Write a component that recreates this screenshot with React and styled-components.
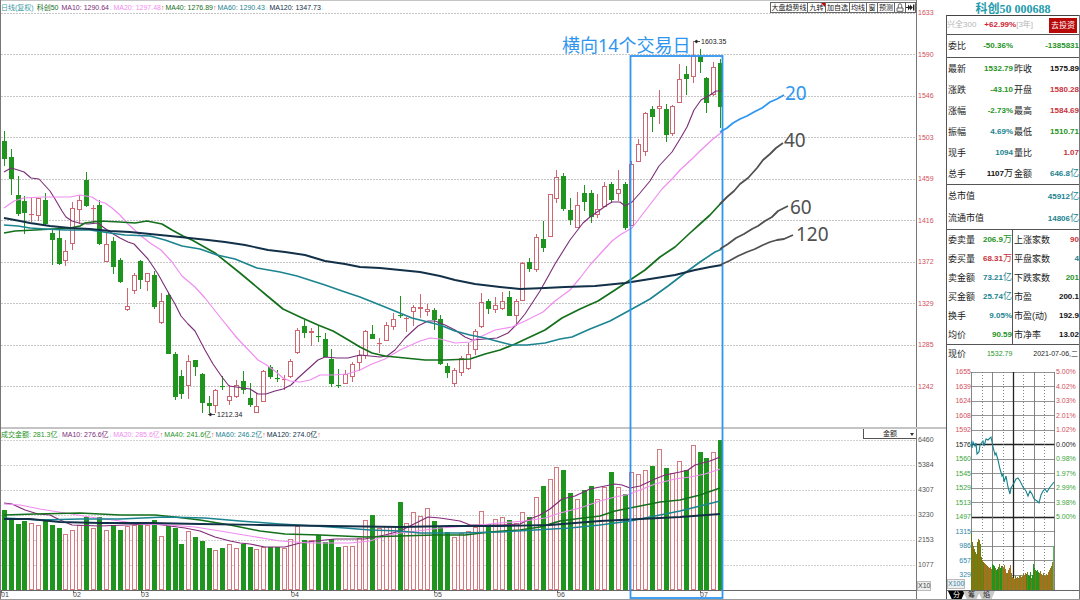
import React, { useState } from "react"
import styled, { createGlobalStyle } from "styled-components"

const GREEN = "#1f941f"
const RED = "#c8323c"
const TEAL = "#1c8490"
const PURPLE = "#7a2d78"
const PINK = "#f08cf0"
const NAVY = "#123048"
const BLUE = "#2f96f0"

const GlobalStyle = createGlobalStyle`
  * {
    box-sizing: border-box;
  }
  body {
    margin: 0;
    background: #fff;
    color: #222;
    font-family: "Liberation Sans", "Noto Sans CJK SC", sans-serif;
    font-size: 7px;
    line-height: 8px;
  }
  button, select {
    font: inherit;
    color: inherit;
    margin: 0;
    padding: 0;
    border-radius: 0;
    background: none;
  }
  a {
    color: inherit;
    text-decoration: none;
  }
`

const Page = styled.div`
  display: grid;
  grid-template-columns: 1fr 134px;
  min-height: 100vh;
  border-bottom: 1px solid #999;
`

const Main = styled.main`
  position: relative;
  border-left: 1px solid #777;
  min-width: 0;
`

const Pane = styled.section`
  display: grid;
  grid-template-columns: 1fr 30px;
  border-top: ${(p) => (p.$divided ? "2px solid #c4c4c4" : "none")};
`

const PlotColumn = styled.div`
  display: flex;
  flex-direction: column;
  min-width: 0;
`

const PlotHeader = styled.div`
  display: flex;
  justify-content: space-between;
  align-items: flex-end;
  height: ${(p) => p.$height}px;
  border-top: ${(p) => (p.$topLine ? "1px solid #c4c4c4" : "none")};
`

const Legend = styled.div`
  display: flex;
  gap: 1px;
  white-space: nowrap;
  line-height: 10px;
`

const LegendItem = styled.span`
  color: ${(p) => p.$color};
  margin-right: ${(p) => (p.$plain ? 2 : 0)}px;
`

const Trend = styled.span`
  color: ${(p) => (p.$up ? "#f03c3c" : "#bfe0e4")};
`

const Plot = styled.svg`
  display: block;
  width: 100%;
  height: auto;
`

const Axis = styled.ul`
  display: flex;
  flex-direction: column;
  justify-content: space-between;
  list-style: none;
  margin: 0;
  padding: 0 0 0 1px;
  height: ${(p) => p.$height}px;
  margin-top: ${(p) => p.$top}px;
  color: ${(p) => p.$color};
  text-align: ${(p) => p.$align || "left"};
`

const AxisLabel = styled.li`
  height: 8px;
  color: ${(p) => p.$color};
`

const AxisColumn = styled.div`
  border-left: 1px solid #777;
`

const UnitBadge = styled.span`
  display: inline-block;
  margin-top: ${(p) => p.$top || 0}px;
  border: 1px solid #bbb;
  background: #eee;
  color: ${(p) => p.$color};
`

const Toolbar = styled.div`
  display: flex;
  height: 11px;
  border: 1px solid #666;
  border-right: none;
`

const ToolButton = styled.button`
  position: relative;
  display: flex;
  align-items: center;
  justify-content: center;
  border: none;
  border-right: 1px solid #666;
  width: ${(p) => p.$width}px;
  white-space: nowrap;
  line-height: 8px;
`

const Corner = styled.i`
  position: absolute;
  top: 0;
  right: 0;
  border-top: 4px solid #d00000;
  border-left: 4px solid transparent;
`

const MetricPicker = styled.label`
  position: relative;
  width: 53px;
  height: 10px;
  align-self: flex-start;
  border: 1px solid #555;
  border-top: none;
  border-right: none;

  select {
    appearance: none;
    border: none;
    width: 100%;
    height: 9px;
    text-align: center;
    text-align-last: center;
    line-height: 9px;
  }
  i {
    position: absolute;
    right: 2px;
    top: 4px;
    border: 2px solid transparent;
    border-top: 3px solid #333;
    pointer-events: none;
  }
`

const Overlay = styled.svg`
  position: absolute;
  top: 0;
  left: 0;
  width: calc(100% - 30px);
  height: auto;
  pointer-events: none;
  font-family: "Noto Sans", "Noto Sans CJK SC", sans-serif;
`

const Side = styled.aside`
  display: flex;
  flex-direction: column;
`

const Title = styled.h1`
  margin: 0;
  height: 15px;
  text-align: center;
  font: bold 12px/18px "Liberation Serif", "Noto Sans CJK SC", serif;
  color: #1e9cac;
`

const Box = styled.div`
  flex: 1;
  border-left: 1px solid #555;
  border-right: 1px solid #777;
`

const Promo = styled.div`
  display: flex;
  align-items: center;
  height: 19px;
  border-top: 1px solid #444;
  font-size: 8px;
  color: #b4b4b4;

  b {
    color: #d02434;
    margin-left: 8px;
  }
  button {
    margin: 1px 2px 0 auto;
    width: 28px;
    height: 15px;
    border: none;
    background: #b80808;
    color: #fff;
    font-size: 8px;
  }
`

const Stats = styled.dl`
  display: grid;
  grid-template-columns: ${(p) => (p.$single ? "1fr" : "66px 1fr")};
  grid-auto-rows: ${(p) => p.$row}px;
  margin: 0;
  border-top: 1px solid #555;
`

const Stat = styled.div`
  display: flex;
  justify-content: space-between;
  align-items: center;
  white-space: nowrap;

  &:nth-child(odd) {
    border-right: ${(p) => (p.$ruled ? "1px solid #555" : "none")};
  }
  dt {
    font-size: 9px;
    padding-left: 1px;
    color: #222;
  }
  dd {
    margin: 0;
    font-size: 8px;
    font-weight: bold;
    color: ${(p) => p.$color};
  }
  small {
    font-size: 9px;
    font-weight: normal;
  }
`

const RatioStat = styled(Stat)`
  display: grid;
  grid-template-columns: 24px 42px 1fr;

  dd {
    text-align: right;
  }
`

const QuoteLine = styled.div`
  display: flex;
  justify-content: space-between;
  align-items: center;
  height: 19px;
  padding: 0 1px;
  border-top: 1px solid #555;

  strong {
    font-size: 9px;
    font-weight: normal;
  }
  output {
    color: ${GREEN};
  }
`

const Intraday = styled.div`
  display: grid;
  grid-template-columns: 24px 1fr 24px;
  padding-top: 5px;
`

const IntradayPlot = styled(Plot)`
  margin-top: 4px;
`

const Tabs = styled.nav`
  display: flex;
  height: 9px;
  border-top: 1px solid #666;
  padding-left: 1px;
`

const Tab = styled.a`
  width: 17px;
  margin-right: -2px;
  text-align: center;
  clip-path: polygon(0 0, 100% 0, 80% 100%, 22% 100%);
  background: ${(p) => (p.$active ? "#000" : "#c8c8c8")};
  color: ${(p) => (p.$active ? "#fff" : "#222")};
`

// high, body top, body bottom, low, direction (1 = up), top of the turnover bar
const days = [
  [131, 141, 159, 166, 0, 510], [149, 157, 179, 195, 0, 519], [176, 195, 214, 216, 0, 524], [196, 201, 213, 234, 0, 521],
  [198, 214, 215, 222, 1, 523], [198, 198, 216, 221, 1, 525], [193, 200, 224, 225, 0, 521], [229, 233, 240, 265, 0, 525],
  [229, 238, 264, 265, 0, 528], [240, 251, 261, 266, 1, 534], [202, 208, 244, 250, 1, 530], [195, 200, 210, 224, 1, 525],
  [172, 180, 206, 207, 0, 517], [205, 208, 209, 223, 1, 528], [200, 205, 244, 245, 0, 517], [233, 244, 262, 262, 1, 530],
  [237, 241, 267, 274, 0, 525], [258, 260, 282, 283, 0, 530], [288, 306, 310, 311, 1, 526], [273, 275, 291, 294, 1, 525],
  [260, 261, 280, 289, 0, 525], [273, 273, 282, 291, 1, 525], [271, 275, 307, 309, 0, 520], [293, 301, 323, 324, 1, 536],
  [292, 295, 354, 354, 0, 526], [352, 354, 397, 400, 0, 528], [370, 376, 394, 399, 0, 544], [355, 361, 386, 399, 1, 531],
  [360, 360, 367, 376, 0, 537], [373, 374, 403, 413, 0, 541], [396, 403, 406, 413, 0, 548], [389, 390, 406, 413, 1, 550],
  [376, 386, 387, 390, 0, 548], [385, 396, 401, 405, 1, 544], [380, 385, 397, 398, 1, 548], [371, 381, 390, 394, 0, 544],
  [383, 398, 405, 407, 0, 547], [393, 406, 413, 413, 1, 549], [370, 371, 402, 402, 1, 547], [365, 367, 377, 379, 0, 547],
  [370, 378, 379, 382, 0, 547], [375, 379, 380, 390, 1, 548], [359, 361, 377, 378, 1, 539], [328, 330, 353, 354, 1, 526],
  [320, 326, 333, 338, 0, 540], [328, 331, 333, 346, 1, 540], [325, 336, 337, 342, 0, 535], [333, 339, 357, 357, 0, 542],
  [349, 359, 384, 387, 0, 539], [369, 385, 386, 388, 0, 547], [370, 374, 384, 384, 1, 546], [362, 364, 377, 382, 1, 546],
  [350, 355, 363, 371, 1, 538], [330, 331, 356, 359, 1, 520], [325, 334, 339, 339, 0, 515], [338, 343, 344, 353, 1, 528],
  [322, 325, 341, 341, 1, 526], [313, 319, 327, 330, 1, 526], [296, 315, 316, 318, 0, 502], [317, 318, 319, 332, 1, 523],
  [305, 307, 312, 326, 1, 512], [294, 307, 309, 318, 1, 516], [304, 309, 312, 316, 1, 508], [308, 310, 320, 330, 0, 521],
  [315, 319, 364, 365, 0, 527], [363, 366, 373, 378, 0, 532], [368, 370, 384, 387, 1, 537], [356, 358, 373, 376, 1, 533],
  [343, 354, 369, 370, 1, 531], [329, 331, 350, 355, 1, 527], [293, 302, 327, 328, 1, 511], [299, 301, 309, 314, 0, 524],
  [297, 305, 310, 313, 1, 519], [292, 301, 309, 310, 1, 517], [291, 297, 316, 316, 0, 520], [299, 301, 316, 326, 1, 523],
  [262, 263, 301, 301, 1, 512], [258, 262, 269, 272, 0, 517], [234, 237, 270, 272, 1, 497], [221, 239, 248, 252, 0, 486],
  [194, 194, 237, 237, 1, 479], [170, 177, 199, 203, 1, 467], [173, 176, 209, 211, 0, 470], [198, 210, 220, 225, 0, 493],
  [192, 205, 228, 228, 1, 499], [185, 193, 202, 211, 0, 490], [190, 193, 217, 223, 0, 486], [194, 209, 215, 218, 1, 499],
  [182, 186, 207, 207, 1, 487], [182, 184, 200, 203, 0, 472], [170, 189, 194, 201, 1, 487], [182, 184, 228, 230, 0, 494],
  [161, 164, 226, 226, 1, 472], [139, 144, 162, 162, 1, 474], [112, 113, 152, 156, 1, 470], [106, 109, 117, 132, 0, 466],
  [90, 106, 109, 124, 1, 449], [104, 109, 135, 142, 0, 468], [105, 106, 134, 136, 1, 473], [64, 79, 103, 103, 1, 461],
  [66, 74, 79, 95, 0, 470], [41, 56, 77, 83, 1, 445], [49, 56, 62, 73, 0, 452], [77, 78, 103, 113, 0, 458],
  [62, 67, 95, 96, 1, 452], [59, 63, 107, 128, 0, 440],
]

const priceLines = [
  { color: PURPLE, width: 1.1, points: "4,172 11,168 18,170 24,172 31,178 39,179 50,191 55,199 62,211 66,217 72,221 79,223 88,224 98,223 103,227 110,232 120,238 128,242 134,244 148,259 158,274 168,292 175,304 181,316 188,324 195,331 205,350 213,364 222,377 229,386 236,387 243,388 250,389 258,394 266,394 275,391 283,389 291,385 298,378 308,369 318,360 325,357 337,358 348,358 360,355 380,357 387,356 395,350 405,338 418,326 428,321 435,321 445,325 455,330 465,337 472,340 485,339 497,338 508,333 516,325 525,314 540,291 555,264 570,240 583,223 590,217 600,210 607,205 612,202 620,202 625,206 632,202 640,193 650,181 659,166 672,152 680,139 687,127 694,110 701,100 710,95 716,91 722,91" },
  { color: PINK, width: 1.2, points: "4,208 14,201 24,198 42,197 70,197 80,195 92,197 98,201 105,203 112,208 120,215 128,224 140,235 150,243 161,250 172,262 182,276 195,287 205,298 220,317 237,338 258,360 265,364 275,371 283,378 290,381 300,382 310,380 320,375 333,375 347,374 360,370 372,364 385,359 400,350 420,341 430,338 440,339 455,343 470,342 480,337 495,330 512,327 525,321 543,312 555,301 570,290 580,278 590,265 600,254 612,241 620,235 632,228 642,215 652,202 662,189 673,178 680,170 693,158 700,151 713,139 722,132" },
  { color: "#14701c", width: 1.7, points: "4,233 15,231 35,230 70,228 80,226 85,223 100,221 120,222 135,223 147,221 162,224 172,230 183,236 192,240 215,253 240,273 265,294 283,309 300,317 318,325 333,331 345,338 360,347 372,353 385,356 405,358 425,360 445,360 470,359 485,354 500,350 515,344 530,337 545,330 562,318 580,309 598,301 615,290 630,280 645,270 660,257 675,247 690,233 700,224 710,215 722,202" },
  { color: TEAL, width: 1.6, points: "4,225 18,226 30,228 45,229 65,230 90,230 110,233 125,235 150,236 165,240 182,246 200,249 217,255 235,259 257,268 280,272 297,276 325,285 345,292 360,297 385,307 412,318 440,325 455,331 470,335 485,338 500,342 512,345 527,345 545,343 560,339 572,337 590,329 610,321 632,309 650,299 668,286 685,273 700,262 715,252 722,249" },
  { color: NAVY, width: 1.9, points: "4,218 20,221 30,223 50,226 70,228 90,229 110,231 130,232 150,234 180,237 208,240 225,242 245,245 268,250 285,252 305,255 325,261 345,264 360,267 380,268 400,270 420,272 440,276 455,280 475,284 500,287 520,289 545,288 565,287 595,286 625,283 650,279 675,275 695,270 710,267 722,265" },
]

const volumeLines = [
  { color: "#822a78", width: 1.2, points: "4,503 12,504 25,510 38,514 50,515 60,520 72,525 100,526 125,525 155,524 170,526 185,528 200,531 215,537 230,541 240,543 250,544 265,547 285,547 300,543 315,541 335,539 365,539 385,535 400,531 410,526 420,521 428,517 440,518 460,521 470,525 500,525 520,524 530,519 540,515 550,509 562,499 575,496 590,489 605,486 615,484 622,485 630,488 640,486 655,479 665,475 680,472 688,470 695,465 710,461 720,457" },
  { color: PINK, width: 1.2, points: "4,504 20,505 40,509 65,513 90,517 120,521 140,524 170,525 195,527 220,531 250,536 280,541 310,543 350,543 370,541 385,536 400,533 425,530 440,528 470,526 500,523 525,521 545,518 560,513 580,508 600,501 615,497 630,494 645,488 655,484 675,479 690,477 705,474 720,469" },
  { color: "#14701c", width: 1.6, points: "4,515 35,514 80,513 120,515 155,515 175,517 200,520 230,525 260,531 285,534 320,535 365,537 400,536 435,535 465,535 490,532 520,530 540,527 560,521 575,519 600,516 615,511 635,507 660,502 680,500 700,495 720,488" },
  { color: TEAL, width: 1.6, points: "4,518 40,520 80,519 120,519 165,517 205,518 240,521 280,524 315,526 345,528 370,530 400,531 420,533 460,533 500,532 535,530 570,528 600,525 630,521 655,516 680,511 700,506 720,501" },
  { color: NAVY, width: 1.8, points: "4,519 30,519 60,522 100,523 150,523 200,524 260,525 330,526 400,527 450,526 500,526 550,525 600,521 640,519 680,517 720,514" },
]

const priceLegend = [
  { color: "#3c9ca8", text: "日线(复权)" },
  { color: "#14701c", text: "科创50" },
  { color: PURPLE, text: "MA10: 1290.64", trend: "↓" },
  { color: PINK, text: "MA20: 1297.48", trend: "↑" },
  { color: "#14701c", text: "MA40: 1276.89", trend: "↑" },
  { color: TEAL, text: "MA60: 1290.43", trend: "↓" },
  { color: NAVY, text: "MA120: 1347.73", trend: "↓" },
]

const volumeLegend = [
  { color: GREEN, text: "成交金额: 281.3亿", trend: "↓" },
  { color: PURPLE, text: "MA10: 276.6亿", trend: "↓" },
  { color: PINK, text: "MA20: 285.6亿", trend: "↑" },
  { color: GREEN, text: "MA40: 241.6亿", trend: "↑" },
  { color: TEAL, text: "MA60: 246.2亿", trend: "↑" },
  { color: NAVY, text: "MA120: 274.0亿", trend: "↑" },
]

const months = [["01", 1], ["02", 73], ["03", 141], ["04", 291], ["05", 434], ["06", 557], ["07", 700]]

const quoteStats = [
  ["最新", "1532.79", GREEN], ["昨收", "1575.89", "#111"],
  ["涨跌", "-43.10", GREEN], ["开盘", "1580.28", RED],
  ["涨幅", "-2.73%", GREEN], ["最高", "1584.69", RED],
  ["振幅", "4.69%", TEAL], ["最低", "1510.71", GREEN],
  ["现手", "1094", TEAL], ["量比", "1.07", RED],
  ["总手", "1107", "#111", "万"], ["金额", "646.8", TEAL, "亿"],
]

const capStats = [
  ["总市值", "45912", TEAL, "亿"],
  ["流通市值", "14806", TEAL, "亿"],
]

const marketStats = [
  ["委卖量", "206.9", GREEN, "万"], ["上涨家数", "90", RED],
  ["委买量", "68.31", RED, "万"], ["平盘家数", "4", TEAL],
  ["卖金额", "73.21", TEAL, "亿"], ["下跌家数", "201", GREEN],
  ["买金额", "25.74", TEAL, "亿"], ["市盈", "200.1", "#111"],
  ["换手", "9.05%", TEAL], ["市盈(动)", "192.9", "#111"],
  ["均价", "90.59", GREEN], ["市净率", "13.02", "#111"],
]

const dayPrices = ["1655", "1639", "1624", "1608", "1592", "1576", "1560", "1545", "1529", "1513", "1497", "1315", "986", "657", "329"]
const dayPercents = ["5.00%", "4.02%", "3.03%", "2.01%", "1.02%", "0.00%", "0.98%", "1.97%", "2.99%", "3.98%", "5.00%"]
const dayLine = "971,441 972,448 973,442 975,446 976,443 977,454 979,452 980,445 983,441 984,446 986,439 988,440 991,437 992,442 993,447 995,455 996,453 998,460 1000,469 1002,476 1003,474 1004,482 1006,476 1008,487 1010,494 1011,488 1014,483 1016,479 1018,478 1020,481 1023,487 1026,491 1028,496 1030,491 1032,494 1034,499 1037,501 1039,503 1041,495 1043,491 1045,489 1047,492 1050,487 1054,482"
const dayVolumes = [
  57, 48, 44, 41, 38, 36, 48, 51, 50, 46, 33, 30, 28, 27, 26, 25, 24, 23, 22, 23, 21,
  26, 25, 24, 22, 20, 21, 23, 26, 22, 24, 24, 22, 25, 21, 17, 17, 20, 22, 25, 17, 13,
  12, 11, 14, 12, 13, 12, 14, 15, 13, 14, 16, 15, 17, 16, 18, 15, 14, 18, 12, 15, 26,
  22, 20, 19, 20, 18, 17, 19, 16, 15, 17, 15, 14, 16, 15, 18, 20, 22, 24, 28, 44,
]

function sideColor(index) {
  if (index < 5) return "#d2505a"
  if (index === 5) return "#222"
  return index < 11 ? "#3aa53a" : "#2f86a8"
}

function LegendBar({ items }) {
  return (
    <Legend>
      {items.map((item) => (
        <LegendItem key={item.text} $color={item.color} $plain={!item.trend}>
          {item.text}
          {item.trend ? <Trend $up={item.trend === "↑"}>{item.trend}</Trend> : null}
        </LegendItem>
      ))}
    </Legend>
  )
}

function Lines({ items }) {
  return items.map((line) => (
    <polyline key={line.points} points={line.points} fill="none" stroke={line.color} strokeWidth={line.width} strokeLinejoin="round" />
  ))
}

const dayX = (i) => Math.round(4 + i * 6.82)

function Candle({ index, day }) {
  const [high, top, bottom, low, up] = day
  const x = dayX(index)
  const color = up ? "#cc6670" : GREEN
  return (
    <g stroke={color} fill={up ? "none" : color}>
      <path d={`M${x + 0.5} ${high}V${top}M${x + 0.5} ${bottom}V${low}`} />
      <rect x={x - 1.5} y={top + 0.5} width="4" height={Math.max(bottom - top - 1, 0.1)} />
    </g>
  )
}

function PricePlot() {
  return (
    <Plot viewBox="1 13 915 414" role="img" aria-label="科创50 日线">
      {[13, 54, 96, 137, 179, 220, 262, 303, 345, 386].map((y) => (
        <path key={y} d={`M1 ${y + 0.5}H916`} stroke="#c6c6c6" strokeDasharray="2 1" />
      ))}
      {days.map((day, i) => <Candle key={i} index={i} day={day} />)}
      <Lines items={priceLines} />
      <g stroke="#222" fill="#222">
        <path d="M695 41.5H700M694.5 41.5L697 40V43ZM210 414.5H215M208.5 414.5L211 413V416Z" strokeWidth="0.8" />
      </g>
      <text x="701" y="44" fontSize="7" fill="#222">1603.35</text>
      <text x="217" y="417" fontSize="7" fill="#222">1212.34</text>
    </Plot>
  )
}

function VolumePlot() {
  return (
    <Plot viewBox="1 440 915 159" role="img" aria-label="成交金额">
      {[440, 465, 490, 515, 540, 565].map((y) => (
        <path key={y} d={`M1 ${y + 0.5}H916`} stroke="#d2d2d2" strokeDasharray="2 1" />
      ))}
      {days.map(([, , , , up, top], i) => (
        <rect
          key={i}
          x={dayX(i) - 1.5}
          y={top + 0.5}
          width="4"
          height={589 - top}
          fill={up ? "#fffafa" : GREEN}
          stroke={up ? "#d27a82" : GREEN}
        />
      ))}
      <Lines items={volumeLines} />
      <path d="M1 590.5H916" stroke="#666" />
      {months.map(([label, x]) => (
        <g key={label}>
          <path d={`M${x + 0.5} 590V593`} stroke="#666" />
          <text x={x} y="597" fontSize="7" fill="#444">{label}</text>
        </g>
      ))}
    </Plot>
  )
}

function Annotations() {
  return (
    <Overlay viewBox="1 0 915 600">
      <rect x="630.5" y="56" width="92" height="542" fill="none" stroke={BLUE} strokeWidth="1.8" />
      <text x="562" y="52" fontSize="18" fill={BLUE}>横向14个交易日</text>
      <g fill="none" strokeWidth="1.8" strokeLinejoin="round">
        <path d="M720 132L727 128L733 123L740 119L747 116L754 112L762 108L770 102L777 99L784 95" stroke={BLUE} />
        <g stroke="#505050">
          <path d="M720 204L727 197L734 191L740 184L748 178L757 168L763 160L770 154L776 148L783 143" />
          <path d="M720 249L728 244L736 238L744 234L752 229L758 226L765 221L772 217L778 211L788 206" />
          <path d="M720 265L729 261L738 256L747 252L755 249L763 245L770 242L777 240L784 239L793 235" />
        </g>
      </g>
      <g fontSize="19" fill="#505050">
        <text x="785" y="100" fill={BLUE}>20</text>
        <text x="784" y="147">40</text>
        <text x="790" y="214">60</text>
        <text x="796" y="241">120</text>
      </g>
    </Overlay>
  )
}

function LockIcon() {
  return (
    <svg width="8" height="9" viewBox="0 0 8 9" fill="none" stroke="#555" strokeWidth="0.9">
      <path d="M1 5H7V8.3H1ZM2.3 5V2.5A1.7 1.7 0 0 1 5.7 2.5V5" />
    </svg>
  )
}

function JumpIcon() {
  return (
    <svg width="9" height="9" viewBox="0 0 9 9" fill="#222">
      <path d="M0 4H2V1.5L4.5 4.5L2 7.5V5H0ZM4 1.5L6.8 4.5L4 7.5ZM7 1.5H8.4V7.5H7Z" />
    </svg>
  )
}

function ChartToolbar() {
  return (
    <Toolbar>
      <ToolButton type="button" $width={37}>大盘趋势线</ToolButton>
      <ToolButton type="button" $width={18}>九转<Corner /></ToolButton>
      <ToolButton type="button" $width={24}>加自选</ToolButton>
      <ToolButton type="button" $width={17}>均线</ToolButton>
      <ToolButton type="button" $width={11}>窗</ToolButton>
      <ToolButton type="button" $width={17}>预测</ToolButton>
      <ToolButton type="button" $width={11} aria-label="锁定"><LockIcon /></ToolButton>
      <ToolButton type="button" $width={10} aria-label="跳转"><JumpIcon /></ToolButton>
    </Toolbar>
  )
}

function StatList({ items, row, single, ruled }) {
  return (
    <Stats $row={row} $single={single}>
      {items.map(([label, value, color, unit]) => (
        <Stat key={label} $color={color} $ruled={ruled}>
          <dt>{label}</dt>
          <dd>{value}{unit ? <small>{unit}</small> : null}</dd>
        </Stat>
      ))}
    </Stats>
  )
}

function IntradayChart() {
  const rows = Array.from({ length: 16 }, (_, i) => Math.round(372 + i * 14.47))
  const cols = [971, 982, 992, 1003, 1013, 1023, 1034, 1044, 1054]
  return (
    <IntradayPlot viewBox="971 372 84 218" role="img" aria-label="分时">
      {rows.map((y, i) => (
        <path key={y} d={`M971 ${y + 0.5}H1055`} stroke={i === 5 || i === 10 ? "#222" : "#777"} strokeWidth={i === 5 || i === 10 ? 1.6 : 0.8} />
      ))}
      {cols.map((x, i) => (
        <path
          key={x}
          d={`M${x + 0.5} 372V590`}
          stroke={i === 4 ? "#222" : "#777"}
          strokeWidth={i === 4 ? 1.3 : 0.9}
          strokeDasharray={i % 2 ? "1 2" : "none"}
        />
      ))}
      {dayVolumes.map((height, i) => {
        let color = i % 3 ? "#8a7410" : "#5c8414"
        if (i > 12) color = i % 4 ? "#a8701e" : "#6a8a1c"
        if ((i > 20 && i < 31) || (i > 54 && i < 69)) color = i % 4 ? GREEN : "#8a7410"
        if (i === 82) color = "#5cb85c"
        return <rect key={i} x={971 + i} y={590 - height} width="1" height={height} fill={color} />
      })}
      <polyline points={dayLine} fill="none" stroke="#17828c" strokeWidth="1.1" />
    </IntradayPlot>
  )
}

function App() {
  const [metric, setMetric] = useState("金额")
  const [tab, setTab] = useState("分")

  return (
    <Page>
      <GlobalStyle />
      <Main>
        <Pane>
          <PlotColumn>
            <PlotHeader $height={13} $topLine>
              <LegendBar items={priceLegend} />
              <ChartToolbar />
            </PlotHeader>
            <PricePlot />
          </PlotColumn>
          <AxisColumn>
            <Axis $top={9} $height={382} $color="#d2505a">
              {["1633", "1590", "1546", "1503", "1459", "1416", "1372", "1329", "1285", "1242"].map((v) => <AxisLabel key={v}>{v}</AxisLabel>)}
            </Axis>
          </AxisColumn>
        </Pane>
        <Pane $divided>
          <PlotColumn>
            <PlotHeader $height={11}>
              <LegendBar items={volumeLegend} />
              <MetricPicker>
                <select aria-label="指标" value={metric} onChange={(e) => setMetric(e.target.value)}>
                  <option>金额</option>
                </select>
                <i />
              </MetricPicker>
            </PlotHeader>
            <VolumePlot />
          </PlotColumn>
          <AxisColumn>
            <Axis $top={7} $height={133} $color="#555">
              {["6460", "5384", "4307", "3230", "2153", "1077"].map((v) => <AxisLabel key={v}>{v}</AxisLabel>)}
            </Axis>
            <UnitBadge $top={12} $color="#444">X10</UnitBadge>
          </AxisColumn>
        </Pane>
        <Annotations />
      </Main>

      <Side>
        <Title>科创50 000688</Title>
        <Box>
          <Promo>
            兴全300<b>+62.99%</b>[3年]
            <button type="button">去投资</button>
          </Promo>
          <Stats $single $row={22}>
            <RatioStat $color={GREEN}>
              <dt>委比</dt>
              <dd>-50.36%</dd>
              <dd>-1385831</dd>
            </RatioStat>
          </Stats>
          <StatList items={quoteStats} row={21} />
          <StatList items={capStats} row={22} single />
          <StatList items={marketStats} row={19} ruled />
          <QuoteLine>
            <strong>现价</strong>
            <output>1532.79</output>
            <time>2021-07-06,二</time>
          </QuoteLine>
          <Intraday>
            <div>
              <Axis $top={0} $height={211} $align="right">
                {dayPrices.map((v, i) => <AxisLabel key={v} $color={sideColor(i)}>{v}</AxisLabel>)}
              </Axis>
              <UnitBadge $color="#2f86a8">X100</UnitBadge>
            </div>
            <IntradayChart />
            <Axis $top={0} $height={153}>
              {dayPercents.map((v, i) => <AxisLabel key={i} $color={sideColor(i)}>{v}</AxisLabel>)}
            </Axis>
          </Intraday>
          <Tabs>
            {["分", "筹", "焰"].map((name) => (
              <Tab key={name} href={"#" + name} $active={tab === name} onClick={() => setTab(name)}>{name}</Tab>
            ))}
          </Tabs>
        </Box>
      </Side>
    </Page>
  )
}

export default App
